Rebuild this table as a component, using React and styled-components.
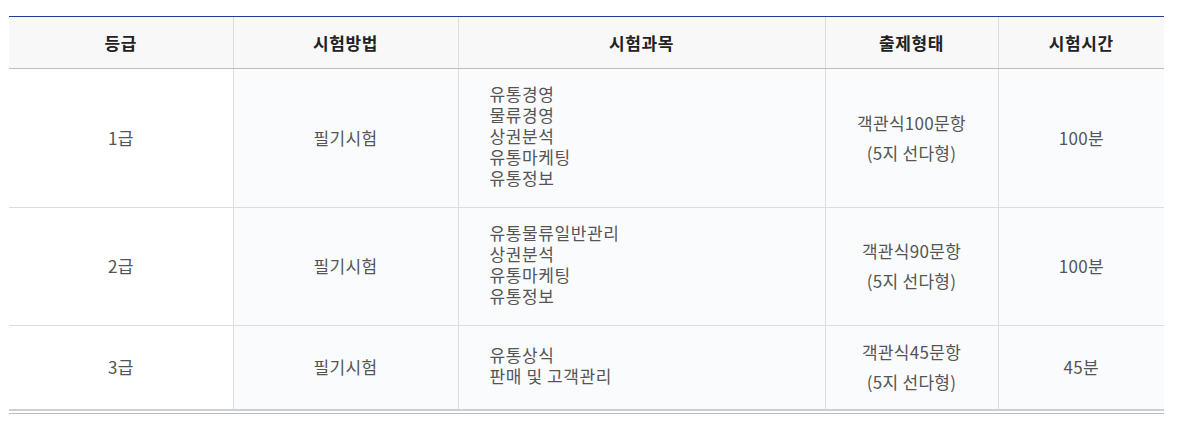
import styled, { createGlobalStyle } from 'styled-components';

const GlobalStyle = createGlobalStyle`
  html, body {
    margin: 0;
    padding: 0;
    background: #fff;
  }
  body {
    font-family: "Noto Sans CJK KR", "Noto Sans", sans-serif;
  }
`;

const Wrapper = styled.div`
  padding: 16px 14px 0 9px;
`;

const TableBox = styled.div`
  border-top: 1px solid #1e3f8e;
  border-bottom: 1px solid #bdbdbd;
  padding-bottom: 2px;
`;

const Table = styled.table`
  width: 100%;
  border-collapse: collapse;
  table-layout: fixed;
  border-bottom: 2px solid #cdcfd8;
`;

const Th = styled.th`
  height: 51px;
  padding: 0;
  background: #f8f8f8;
  border-left: 1px solid #dcdcdc;
  border-bottom: 1px solid #bdbdbd;
  font-size: 17px;
  letter-spacing: 0.6px;
  font-weight: 700;
  color: #222;
  text-align: center;
  vertical-align: middle;
  &:first-child {
    border-left: none;
  }
`;

const Td = styled.td`
  padding: 11px 0 12px;
  background: ${p => (p.$plain ? '#fff' : '#fafbfd')};
  border-left: 1px solid #dcdde3;
  border-top: 1px solid #dcdde3;
  font-size: 17px;
  letter-spacing: 0.3px;
  color: #555;
  text-align: ${p => (p.$left ? 'left' : 'center')};
  vertical-align: middle;
  line-height: 30px;
  &:first-child {
    border-left: none;
  }
`;

const SubjectList = styled.ul`
  list-style: none;
  margin: 0;
  padding: 3px 0 7px 31px;
  line-height: 21px;
  letter-spacing: 0.6px;
`;

const rows = [
  {
    grade: '1급',
    subjects: ['유통경영', '물류경영', '상권분석', '유통마케팅', '유통정보'],
    type: '객관식100문항',
    time: '100분',
  },
  {
    grade: '2급',
    subjects: ['유통물류일반관리', '상권분석', '유통마케팅', '유통정보'],
    type: '객관식90문항',
    time: '100분',
  },
  {
    grade: '3급',
    subjects: ['유통상식', '판매 및 고객관리'],
    type: '객관식45문항',
    time: '45분',
  },
];

export default function App() {
  return (
    <>
      <GlobalStyle />
      <Wrapper>
        <TableBox>
          <Table>
            <colgroup>
              <col style={{ width: 224 }} />
              <col style={{ width: 225 }} />
              <col style={{ width: 367 }} />
              <col style={{ width: 173 }} />
              <col />
            </colgroup>
            <thead>
              <tr>
                <Th>등급</Th>
                <Th>시험방법</Th>
                <Th>시험과목</Th>
                <Th>출제형태</Th>
                <Th>시험시간</Th>
              </tr>
            </thead>
            <tbody>
              {rows.map(r => (
                <tr key={r.grade}>
                  <Td $plain>{r.grade}</Td>
                  <Td>필기시험</Td>
                  <Td $left>
                    <SubjectList>
                      {r.subjects.map(s => (
                        <li key={s}>{s}</li>
                      ))}
                    </SubjectList>
                  </Td>
                  <Td>
                    {r.type}
                    <br />
                    (5지 선다형)
                  </Td>
                  <Td>{r.time}</Td>
                </tr>
              ))}
            </tbody>
          </Table>
        </TableBox>
      </Wrapper>
    </>
  );
}
